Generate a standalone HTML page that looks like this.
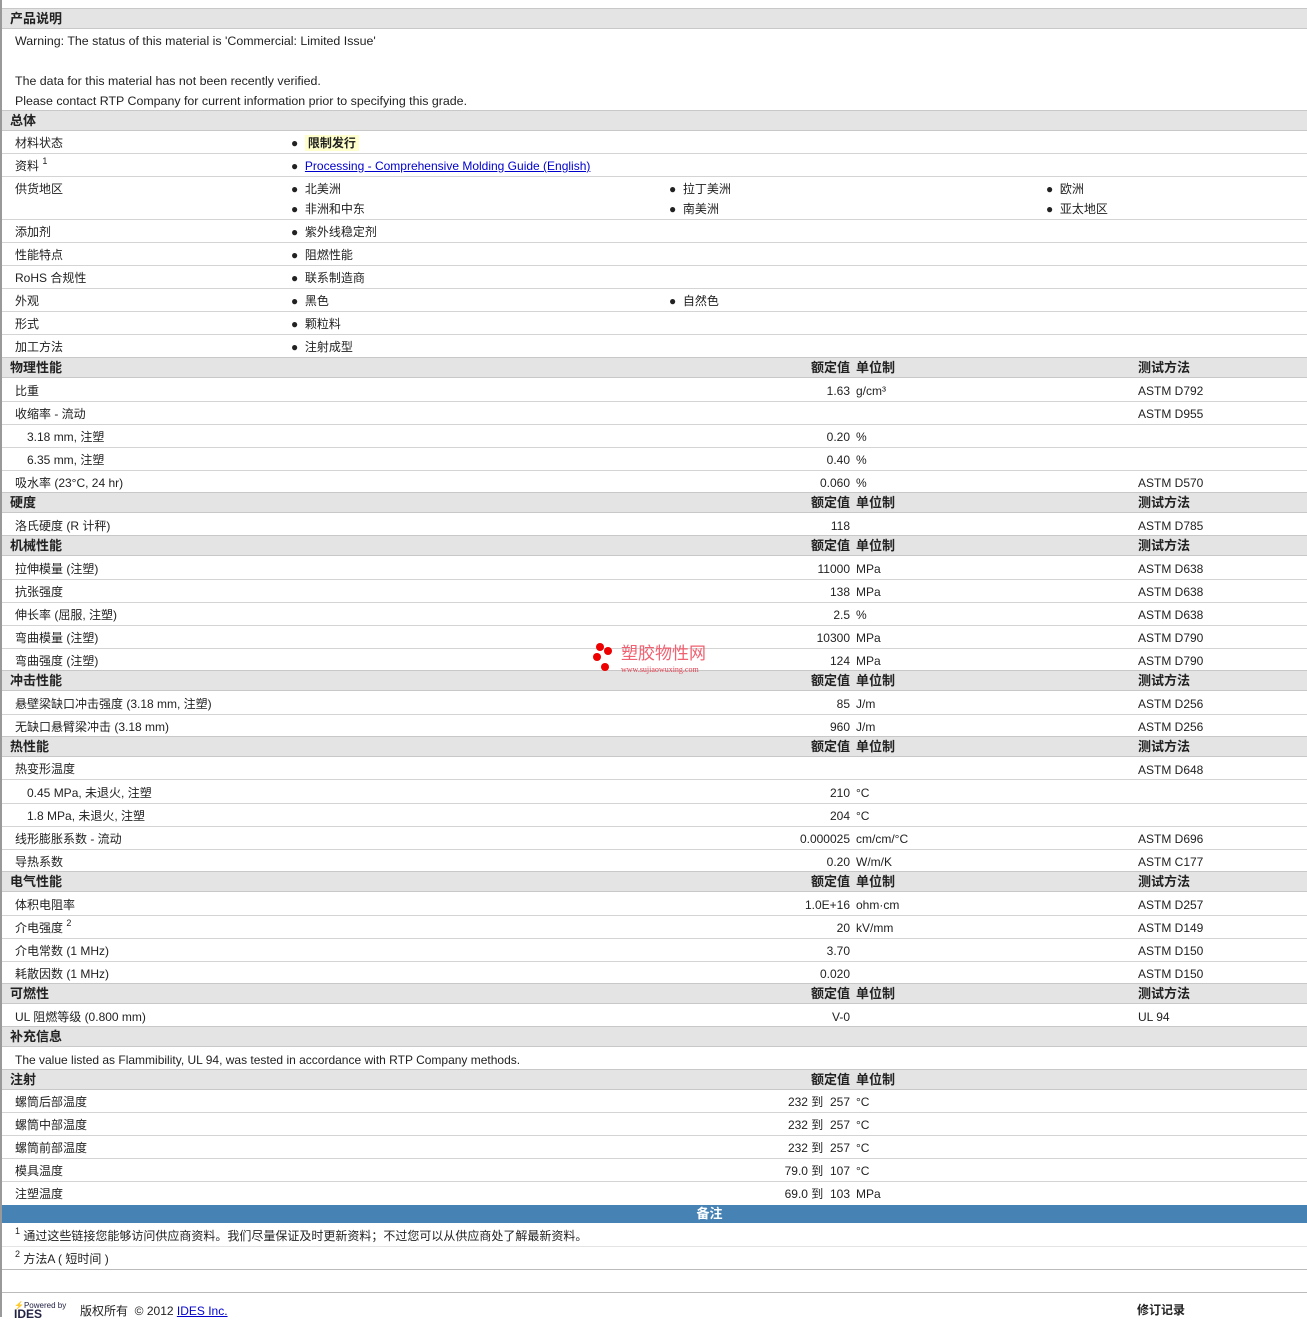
<!DOCTYPE html>
<html><head><meta charset="utf-8"><style>
body{margin:0;width:1307px;height:1317px;position:relative;overflow:hidden;background:#fff;font-family:"Liberation Sans","Noto Sans CJK SC",sans-serif;font-size:12px;color:#222}
.lb{position:absolute;left:0;top:0;width:2px;height:1317px;background:#999}
.h{position:absolute;left:2px;right:0;height:19px;background:#e4e4e4;border-top:1px solid #c8c8c8;border-bottom:1px solid #c8c8c8;font-weight:bold;font-size:13px;line-height:19px}
.h .n{position:absolute;left:8px}
.h .v{position:absolute;right:457px}
.h .u{position:absolute;left:854px}
.h .t{position:absolute;left:1136px}
.r{position:absolute;left:2px;right:0;height:22px;border-bottom:1px solid #d4d4d4;line-height:24px}
.r span{position:absolute;white-space:nowrap}
.l{left:13px}.i{left:25px}
.v{right:457px}.u{left:854px}.t{left:1136px}
.b{left:289px}.b2{left:667px}.b3{left:1044px}
.p{position:absolute;left:15px;font-size:12.4px}
sup{font-size:9px;vertical-align:6px;line-height:0}
</style></head><body>
<div class="lb"></div>
<div class="h" style="top:8px"><span class="n">产品说明</span></div>
<div class="p" style="top:34px">Warning: The status of this material is 'Commercial: Limited Issue'</div>
<div class="p" style="top:74px">The data for this material has not been recently verified.</div>
<div class="p" style="top:94px">Please contact RTP Company for current information prior to specifying this grade.</div>
<div class="h" style="top:110px"><span class="n">总体</span></div>
<div class="r" style="top:131px"><span class="l">材料状态</span><span class="b">●&nbsp; <b style="background:#ffffcc;padding:1px 3px">限制发行</b></span></div>
<div class="r" style="top:154px"><span class="l">资料 <sup>1</sup></span><span class="b">●&nbsp; <a style="color:#00c;text-decoration:underline">Processing - Comprehensive Molding Guide (English)</a></span></div>
<div class="r" style="top:177px;height:42px"><span class="l">供货地区</span><span class="b">●&nbsp; 北美洲</span><span class="b2">●&nbsp; 拉丁美洲</span><span class="b3">●&nbsp; 欧洲</span><span class="b" style="top:20px">●&nbsp; 非洲和中东</span><span class="b2" style="top:20px">●&nbsp; 南美洲</span><span class="b3" style="top:20px">●&nbsp; 亚太地区</span></div>
<div class="r" style="top:220px"><span class="l">添加剂</span><span class="b">●&nbsp; 紫外线稳定剂</span></div>
<div class="r" style="top:243px"><span class="l">性能特点</span><span class="b">●&nbsp; 阻燃性能</span></div>
<div class="r" style="top:266px"><span class="l">RoHS 合规性</span><span class="b">●&nbsp; 联系制造商</span></div>
<div class="r" style="top:289px"><span class="l">外观</span><span class="b">●&nbsp; 黑色</span><span class="b2">●&nbsp; 自然色</span></div>
<div class="r" style="top:312px"><span class="l">形式</span><span class="b">●&nbsp; 颗粒料</span></div>
<div class="r" style="top:335px;border:0"><span class="l">加工方法</span><span class="b">●&nbsp; 注射成型</span></div>
<div class="h" style="top:357px"><span class="n">物理性能</span><span class="v">额定值</span><span class="u">单位制</span><span class="t">测试方法</span></div>
<div class="r" style="top:379px"><span class="l">比重</span><span class="v">1.63</span><span class="u">g/cm³</span><span class="t">ASTM D792</span></div>
<div class="r" style="top:402px"><span class="l">收缩率 - 流动</span><span class="t">ASTM D955</span></div>
<div class="r" style="top:425px"><span class="i">3.18 mm, 注塑</span><span class="v">0.20</span><span class="u">%</span></div>
<div class="r" style="top:448px"><span class="i">6.35 mm, 注塑</span><span class="v">0.40</span><span class="u">%</span></div>
<div class="r" style="top:471px;border:0"><span class="l">吸水率 (23°C, 24 hr)</span><span class="v">0.060</span><span class="u">%</span><span class="t">ASTM D570</span></div>
<div class="h" style="top:492px"><span class="n">硬度</span><span class="v">额定值</span><span class="u">单位制</span><span class="t">测试方法</span></div>
<div class="r" style="top:514px;border:0"><span class="l">洛氏硬度 (R 计秤)</span><span class="v">118</span><span class="t">ASTM D785</span></div>
<div class="h" style="top:535px"><span class="n">机械性能</span><span class="v">额定值</span><span class="u">单位制</span><span class="t">测试方法</span></div>
<div class="r" style="top:557px"><span class="l">拉伸模量 (注塑)</span><span class="v">11000</span><span class="u">MPa</span><span class="t">ASTM D638</span></div>
<div class="r" style="top:580px"><span class="l">抗张强度</span><span class="v">138</span><span class="u">MPa</span><span class="t">ASTM D638</span></div>
<div class="r" style="top:603px"><span class="l">伸长率 (屈服, 注塑)</span><span class="v">2.5</span><span class="u">%</span><span class="t">ASTM D638</span></div>
<div class="r" style="top:626px"><span class="l">弯曲模量 (注塑)</span><span class="v">10300</span><span class="u">MPa</span><span class="t">ASTM D790</span></div>
<div class="r" style="top:649px;border:0"><span class="l">弯曲强度 (注塑)</span><span class="v">124</span><span class="u">MPa</span><span class="t">ASTM D790</span></div>
<div class="h" style="top:670px"><span class="n">冲击性能</span><span class="v">额定值</span><span class="u">单位制</span><span class="t">测试方法</span></div>
<div class="r" style="top:692px"><span class="l">悬壁梁缺口冲击强度 (3.18 mm, 注塑)</span><span class="v">85</span><span class="u">J/m</span><span class="t">ASTM D256</span></div>
<div class="r" style="top:715px;border:0"><span class="l">无缺口悬臂梁冲击 (3.18 mm)</span><span class="v">960</span><span class="u">J/m</span><span class="t">ASTM D256</span></div>
<div class="h" style="top:736px"><span class="n">热性能</span><span class="v">额定值</span><span class="u">单位制</span><span class="t">测试方法</span></div>
<div class="r" style="top:757px"><span class="l">热变形温度</span><span class="t" style="top:1px">ASTM D648</span></div>
<div class="r" style="top:781px"><span class="i">0.45 MPa, 未退火, 注塑</span><span class="v">210</span><span class="u">°C</span></div>
<div class="r" style="top:804px"><span class="i">1.8 MPa, 未退火, 注塑</span><span class="v">204</span><span class="u">°C</span></div>
<div class="r" style="top:827px"><span class="l">线形膨胀系数 - 流动</span><span class="v">0.000025</span><span class="u">cm/cm/°C</span><span class="t">ASTM D696</span></div>
<div class="r" style="top:850px;border:0"><span class="l">导热系数</span><span class="v">0.20</span><span class="u">W/m/K</span><span class="t">ASTM C177</span></div>
<div class="h" style="top:871px"><span class="n">电气性能</span><span class="v">额定值</span><span class="u">单位制</span><span class="t">测试方法</span></div>
<div class="r" style="top:893px"><span class="l">体积电阻率</span><span class="v">1.0E+16</span><span class="u">ohm·cm</span><span class="t">ASTM D257</span></div>
<div class="r" style="top:916px"><span class="l">介电强度 <sup>2</sup></span><span class="v">20</span><span class="u">kV/mm</span><span class="t">ASTM D149</span></div>
<div class="r" style="top:939px"><span class="l">介电常数 (1 MHz)</span><span class="v">3.70</span><span class="t">ASTM D150</span></div>
<div class="r" style="top:962px;border:0"><span class="l">耗散因数 (1 MHz)</span><span class="v">0.020</span><span class="t">ASTM D150</span></div>
<div class="h" style="top:983px"><span class="n">可燃性</span><span class="v">额定值</span><span class="u">单位制</span><span class="t">测试方法</span></div>
<div class="r" style="top:1005px;border:0"><span class="l">UL 阻燃等级 (0.800 mm)</span><span class="v">V-0</span><span class="t">UL 94</span></div>
<div class="h" style="top:1026px"><span class="n">补充信息</span></div>
<div class="r" style="top:1048px;border:0"><span class="l">The value listed as Flammibility, UL 94, was tested in accordance with RTP Company methods.</span></div>
<div class="h" style="top:1069px"><span class="n">注射</span><span class="v">额定值</span><span class="u">单位制</span></div>
<div class="r" style="top:1090px"><span class="l">螺筒后部温度</span><span class="v">232 到&nbsp; 257</span><span class="u">°C</span></div>
<div class="r" style="top:1113px"><span class="l">螺筒中部温度</span><span class="v">232 到&nbsp; 257</span><span class="u">°C</span></div>
<div class="r" style="top:1136px"><span class="l">螺筒前部温度</span><span class="v">232 到&nbsp; 257</span><span class="u">°C</span></div>
<div class="r" style="top:1159px"><span class="l">模具温度</span><span class="v">79.0 到&nbsp; 107</span><span class="u">°C</span></div>
<div class="r" style="top:1182px;border:0"><span class="l">注塑温度</span><span class="v">69.0 到&nbsp; 103</span><span class="u">MPa</span></div>
<div style="position:absolute;left:2px;right:0;top:1205px;height:18px;background:#4682b4;color:#fff;font-weight:bold;font-size:13px;line-height:18px;text-align:center;padding-left:110px;box-sizing:border-box">备注</div>
<div class="r" style="top:1224px;border-bottom-color:#e4e4e4"><span class="l"><sup>1</sup> 通过这些链接您能够访问供应商资料。我们尽量保证及时更新资料；不过您可以从供应商处了解最新资料。</span></div>
<div class="r" style="top:1247px;border-bottom-color:#bbb"><span class="l"><sup>2</sup> 方法A ( 短时间 )</span></div>
<div class="r" style="top:1270px;border-bottom-color:#bbb"></div>
<div style="position:absolute;left:14px;top:1302px;font-size:8px;color:#335;line-height:8px">⚡<span style="color:#224">Powered by</span><br><b style="font-size:12px;color:#224">IDES</b></div>
<div style="position:absolute;left:80px;top:1302px">版权所有&nbsp; © 2012 <a style="color:#00c;text-decoration:underline">IDES Inc.</a></div>
<div style="position:absolute;left:1137px;top:1301px;font-weight:bold">修订记录</div>
<div style="position:absolute;left:591px;top:642px;width:130px;height:34px">
<div style="position:absolute;left:5px;top:1px;width:8px;height:8px;border-radius:50%;background:#e00"></div>
<div style="position:absolute;left:13px;top:5px;width:8px;height:8px;border-radius:50%;background:#e00"></div>
<div style="position:absolute;left:2px;top:11px;width:8px;height:8px;border-radius:50%;background:#e00"></div>
<div style="position:absolute;left:10px;top:21px;width:8px;height:8px;border-radius:50%;background:#e00"></div>
<div style="position:absolute;left:30px;top:2px;font-size:17px;color:#f06070;line-height:20px">塑胶物性网</div>
<div style="position:absolute;left:30px;top:23px;font-size:8px;color:#e04050;font-family:'Liberation Serif',serif">www.sujiaowuxing.com</div>
</div>
</body></html>
